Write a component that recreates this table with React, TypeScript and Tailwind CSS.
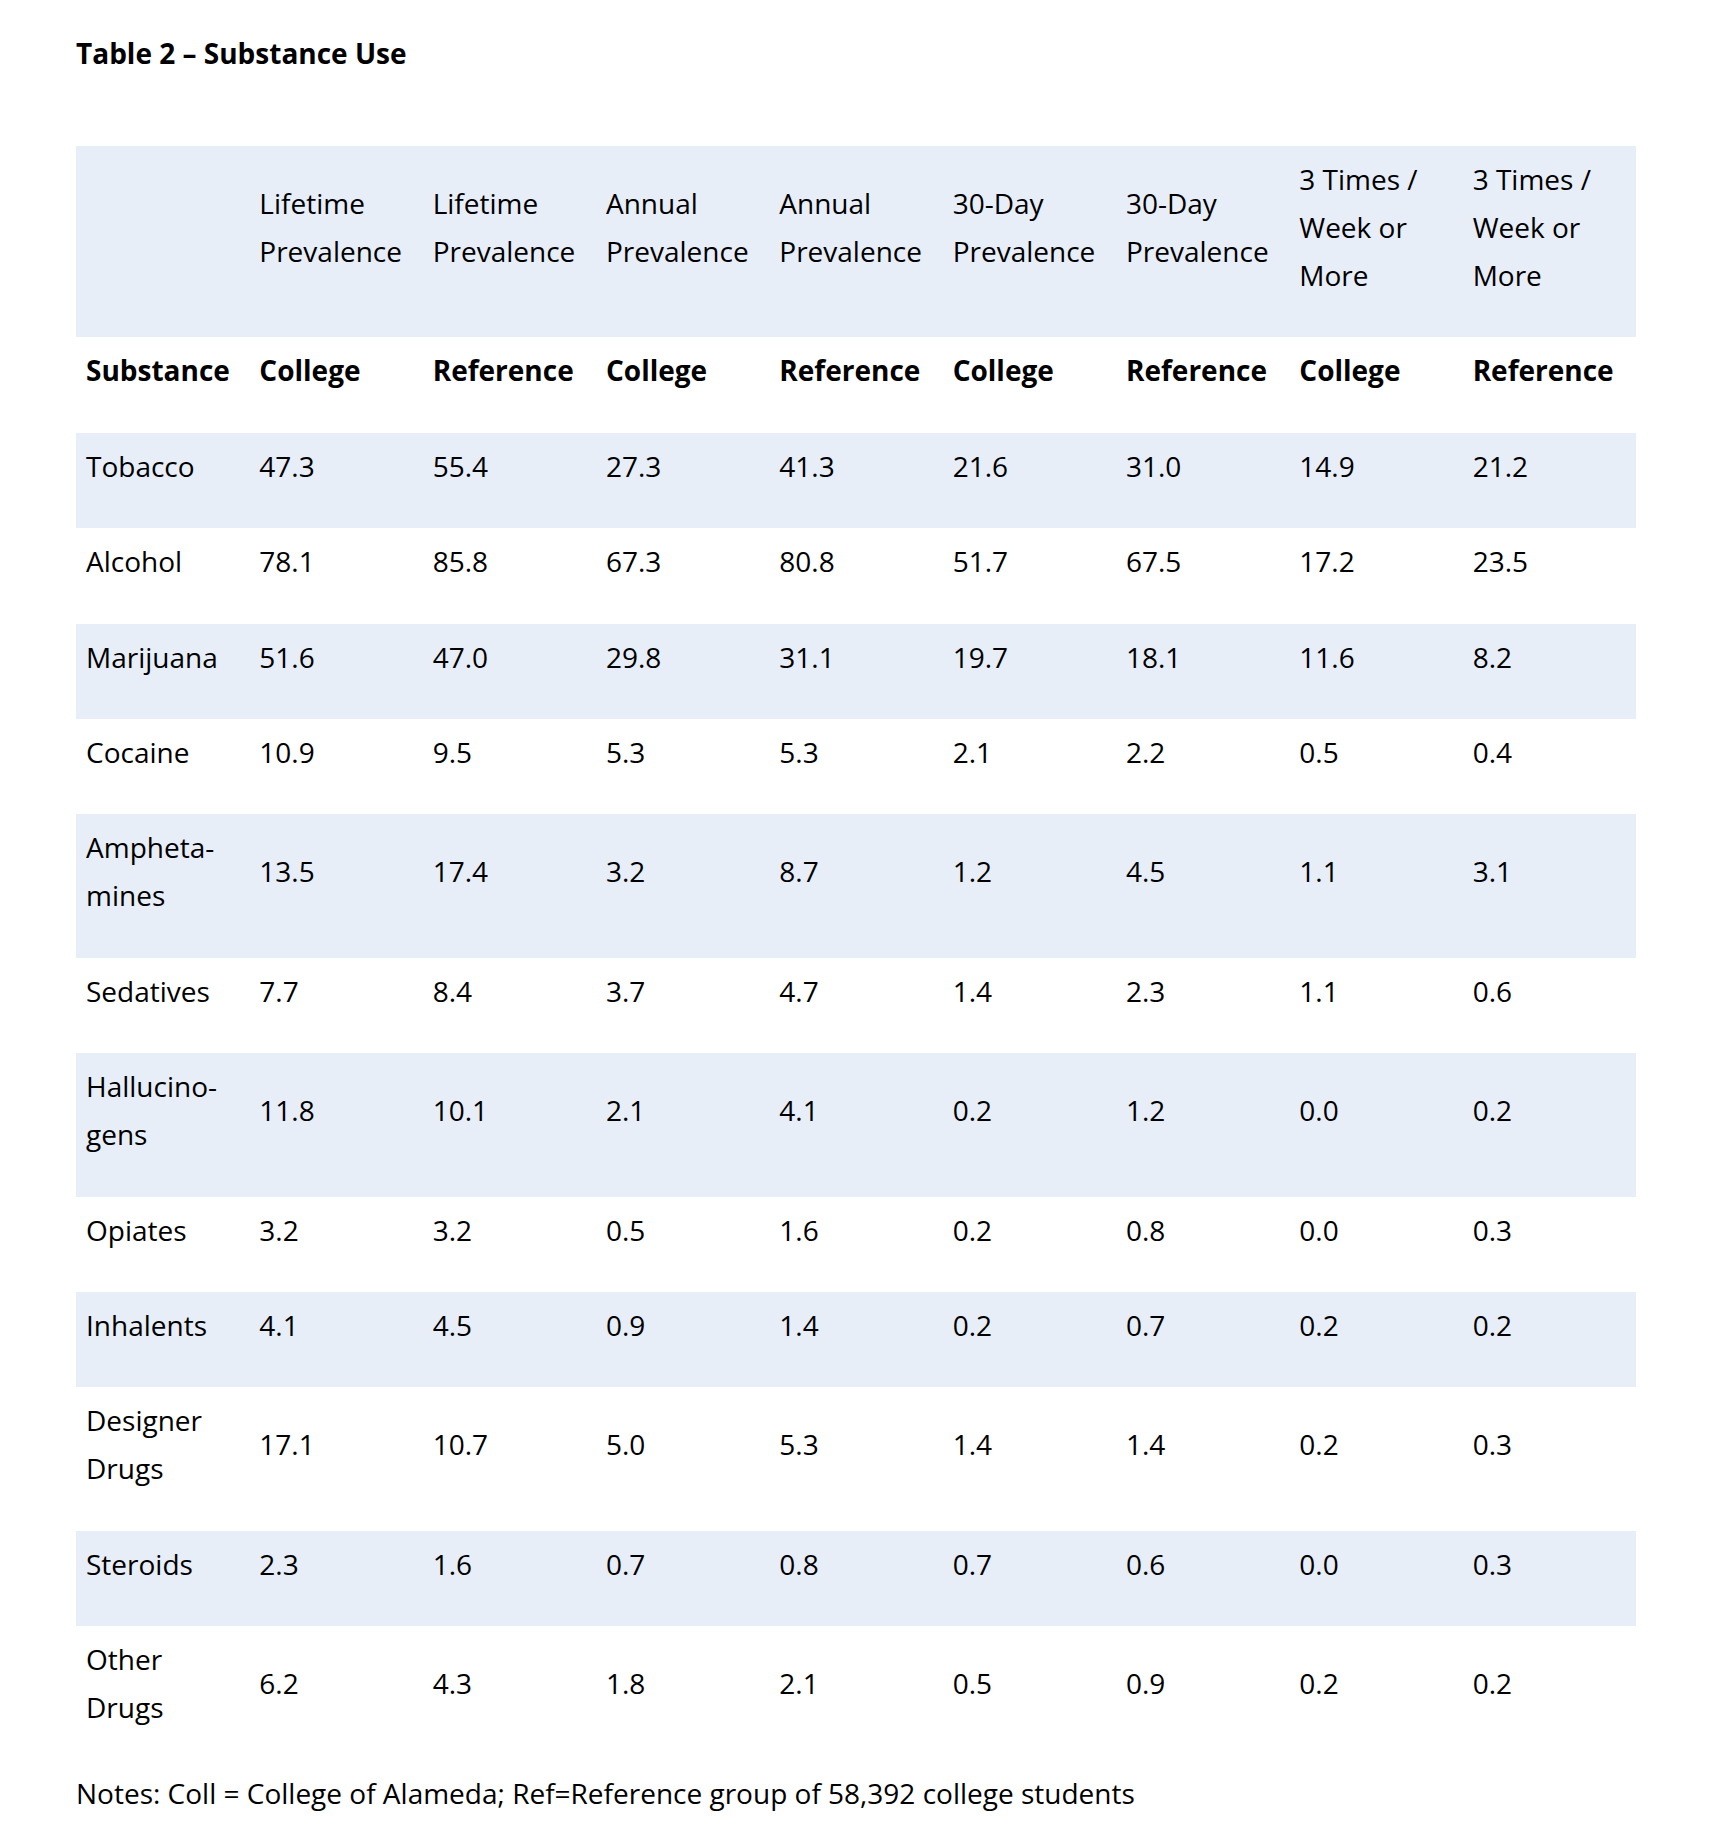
import React from "react";

type Row = {
  name: React.ReactNode;
  values: string[];
};

const rows: Row[] = [
  { name: "Tobacco", values: ["47.3", "55.4", "27.3", "41.3", "21.6", "31.0", "14.9", "21.2"] },
  { name: "Alcohol", values: ["78.1", "85.8", "67.3", "80.8", "51.7", "67.5", "17.2", "23.5"] },
  { name: "Marijuana", values: ["51.6", "47.0", "29.8", "31.1", "19.7", "18.1", "11.6", "8.2"] },
  { name: "Cocaine", values: ["10.9", "9.5", "5.3", "5.3", "2.1", "2.2", "0.5", "0.4"] },
  {
    name: (
      <>
        Ampheta-
        <br />
        mines
      </>
    ),
    values: ["13.5", "17.4", "3.2", "8.7", "1.2", "4.5", "1.1", "3.1"],
  },
  { name: "Sedatives", values: ["7.7", "8.4", "3.7", "4.7", "1.4", "2.3", "1.1", "0.6"] },
  {
    name: (
      <>
        Hallucino-
        <br />
        gens
      </>
    ),
    values: ["11.8", "10.1", "2.1", "4.1", "0.2", "1.2", "0.0", "0.2"],
  },
  { name: "Opiates", values: ["3.2", "3.2", "0.5", "1.6", "0.2", "0.8", "0.0", "0.3"] },
  { name: "Inhalents", values: ["4.1", "4.5", "0.9", "1.4", "0.2", "0.7", "0.2", "0.2"] },
  {
    name: (
      <>
        Designer
        <br />
        Drugs
      </>
    ),
    values: ["17.1", "10.7", "5.0", "5.3", "1.4", "1.4", "0.2", "0.3"],
  },
  { name: "Steroids", values: ["2.3", "1.6", "0.7", "0.8", "0.7", "0.6", "0.0", "0.3"] },
  {
    name: (
      <>
        Other
        <br />
        Drugs
      </>
    ),
    values: ["6.2", "4.3", "1.8", "2.1", "0.5", "0.9", "0.2", "0.2"],
  },
];

const periods = [
  "Lifetime Prevalence",
  "Lifetime Prevalence",
  "Annual Prevalence",
  "Annual Prevalence",
  "30-Day Prevalence",
  "30-Day Prevalence",
  "3 Times / Week or More",
  "3 Times / Week or More",
];

const groups = ["College", "Reference", "College", "Reference", "College", "Reference", "College", "Reference"];

const cell = "px-[10px] pt-[9px] pb-[38.4px] align-middle text-left";

export default function App() {
  return (
    <div className="min-h-[1835px] bg-white px-[76px] pt-[37px] text-black font-['Open_Sans',sans-serif]">
      <h1 className="text-[28px] font-bold leading-[32px]">Table 2 – Substance Use</h1>

      <table className="mt-[77px] w-[1560px] table-fixed border-collapse text-[28px] leading-[48px]">
        <colgroup>
          {Array.from({ length: 9 }).map((_, i) => (
            <col key={i} className="w-[173.33px]" />
          ))}
        </colgroup>
        <thead>
          <tr className="bg-[#e7eef8]">
            <th className={`${cell} font-normal`}></th>
            {periods.map((p, i) => (
              <th key={i} className={`${cell} font-normal`}>
                {p}
              </th>
            ))}
          </tr>
          <tr>
            <th className={`${cell} font-bold`}>Substance</th>
            {groups.map((g, i) => (
              <th key={i} className={`${cell} font-bold`}>
                {g}
              </th>
            ))}
          </tr>
        </thead>
        <tbody>
          {rows.map((row, idx) => (
            <tr key={idx} className={idx % 2 === 0 ? "bg-[#e7eef8]" : "bg-white"}>
              <td className={cell}>{row.name}</td>
              {row.values.map((v, i) => (
                <td key={i} className={cell}>
                  {v}
                </td>
              ))}
            </tr>
          ))}
        </tbody>
      </table>

      <p className="text-[28px] leading-[48px]">
        Notes: Coll = College of Alameda; Ref=Reference group of 58,392 college students
      </p>
    </div>
  );
}
